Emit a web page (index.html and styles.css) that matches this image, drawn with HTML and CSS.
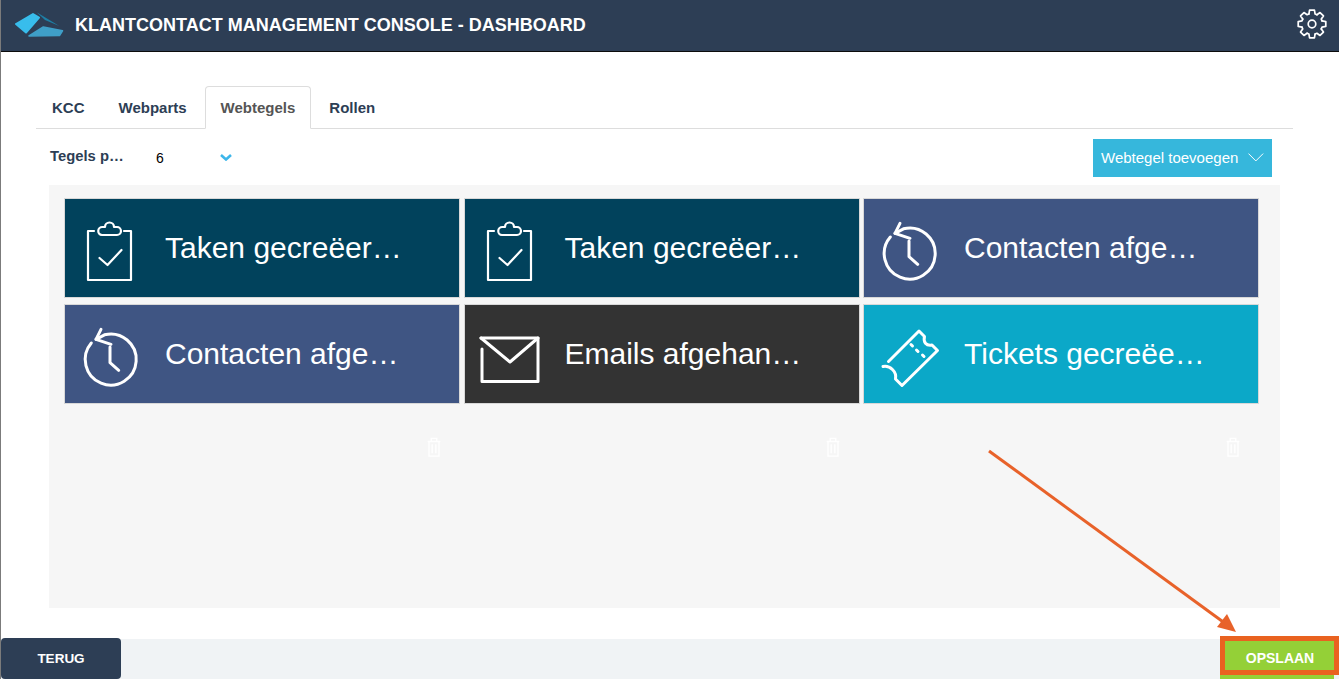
FILE: index.html
```html
<!DOCTYPE html>
<html lang="en">
<head>
    <meta charset="UTF-8">
    <meta name="viewport" content="width=device-width, initial-scale=1.0">
    <title>Klantcontact Management Console - Dashboard</title>
    <link rel="stylesheet" href="styles.css">
</head>
<body>
    <div class="page">
        <header class="topbar">
            <svg class="logo" viewBox="0 0 52 26" width="52" height="26">
                <path fill="#38bdec" stroke="#38bdec" stroke-width="2" stroke-linejoin="round" d="M2 12 L19 2 L25 5.500 L12 20.500 Z"/>
                <path fill="#1d7fa6" d="M22.700 0.300 L45.300 14 L31 8 Z"/>
                <path fill="#3f9fc8" stroke="#3f9fc8" stroke-width="1.500" stroke-linejoin="round" d="M15 24 L29.300 15 L48.500 18.800 L45.500 23.500 Z"/>
            </svg>
            <h1 class="title">KLANTCONTACT MANAGEMENT CONSOLE - DASHBOARD</h1>
            <svg class="gear" viewBox="-16 -16 32 32" width="32" height="32">
                <defs>
                    <path id="gear-seg" d="M-3.070 -10.040 L-2.430 -13.790 L2.430 -13.790 L3.070 -10.040 L4.930 -9.270"/>
                </defs>
                <g fill="none" stroke="#fff" stroke-width="1.700" stroke-linejoin="round" stroke-linecap="round">
                    <use href="#gear-seg"/>
                    <use href="#gear-seg" transform="rotate(45)"/>
                    <use href="#gear-seg" transform="rotate(90)"/>
                    <use href="#gear-seg" transform="rotate(135)"/>
                    <use href="#gear-seg" transform="rotate(180)"/>
                    <use href="#gear-seg" transform="rotate(225)"/>
                    <use href="#gear-seg" transform="rotate(270)"/>
                    <use href="#gear-seg" transform="rotate(315)"/>
                    <circle r="3.800"/>
                </g>
            </svg>
        </header>

        <main class="content">
            <nav class="tabs">
                <a class="tab">KCC</a>
                <a class="tab">Webparts</a>
                <a class="tab active">Webtegels</a>
                <a class="tab">Rollen</a>
            </nav>

            <div class="toolbar">
                <span class="field-label">Tegels p…</span>
                <span class="field-value">6</span>
                <svg class="field-arrow" viewBox="0 0 12 7" width="12" height="7">
                    <path d="M1 1 L6 5.500 L11 1" fill="none" stroke="#3db6ea" stroke-width="2.600"/>
                </svg>
                <button class="add-btn">
                    Webtegel toevoegen
                    <svg viewBox="0 0 16 9" width="16" height="9">
                        <path d="M0.500 0.500 L8 8 L15.500 0.500" fill="none" stroke="#fff" stroke-width="1"/>
                    </svg>
                </button>
            </div>

            <section class="panel">
                <div class="tile-grid">
                    <div class="tile teal">
                        <svg class="tile-icon" viewBox="0 0 100 98">
                            <g class="line">
                                <path d="M29 32H23V81H66V32H59"/>
                                <path d="M37 36H52a4 4 0 0 0 0-8H49a4.500 4.500 0 0 0-9 0H37.500a4 4 0 0 0-.5 8z"/>
                                <path d="M34.500 59L42.500 66L56.500 51"/>
                            </g>
                        </svg>
                        <span class="tile-text">Taken gecreëer…</span>
                    </div>
                    <div class="tile teal">
                        <svg class="tile-icon" viewBox="0 0 100 98">
                            <g class="line">
                                <path d="M29 32H23V81H66V32H59"/>
                                <path d="M37 36H52a4 4 0 0 0 0-8H49a4.500 4.500 0 0 0-9 0H37.500a4 4 0 0 0-.5 8z"/>
                                <path d="M34.500 59L42.500 66L56.500 51"/>
                            </g>
                        </svg>
                        <span class="tile-text">Taken gecreëer…</span>
                    </div>
                    <div class="tile blue">
                        <svg class="tile-icon" viewBox="0 0 100 98">
                            <g class="line thick">
                                <path d="M26.300 38A25.500 25.500 0 1 0 39.500 29.800L31 34.300"/>
                                <path d="M36 24.300L31 34.300L46 39.300"/>
                                <path d="M45 42V57.700L53.700 65.300"/>
                            </g>
                        </svg>
                        <span class="tile-text">Contacten afge…</span>
                    </div>
                    <div class="tile blue">
                        <svg class="tile-icon" viewBox="0 0 100 98">
                            <g class="line thick">
                                <path d="M26.300 38A25.500 25.500 0 1 0 39.500 29.800L31 34.300"/>
                                <path d="M36 24.300L31 34.300L46 39.300"/>
                                <path d="M45 42V57.700L53.700 65.300"/>
                            </g>
                        </svg>
                        <span class="tile-text">Contacten afge…</span>
                    </div>
                    <div class="tile dark">
                        <svg class="tile-icon" viewBox="0 0 100 98">
                            <g class="line thick">
                                <path d="M16 33H73V76.500H17V44"/>
                                <path d="M16 33L45 57L73 33"/>
                            </g>
                        </svg>
                        <span class="tile-text">Emails afgehan…</span>
                    </div>
                    <div class="tile cyan">
                        <svg class="tile-icon" viewBox="0 0 100 98">
                            <g class="line thick">
                                <path d="M24.500 56.500L55 26L60.500 31.500C59 37 62 41 68 40L73.500 45.500L38 80.500L31.500 74C33 67 26 60 19 61.500"/>
                                <path d="M47 39.500L48.500 41M52.500 45L54 46.500M58.500 50L60 51.500"/>
                            </g>
                        </svg>
                        <span class="tile-text">Tickets gecreëe…</span>
                    </div>
                </div>

                <div class="trash-row">
                    <svg class="trash" viewBox="0 0 16 22" width="16" height="20"><path d="M1 5H15M5 5V1.500H11V5M2.500 5V21H13.500V5M6 8V18M10 8V18"/></svg>
                    <svg class="trash" viewBox="0 0 16 22" width="16" height="20"><path d="M1 5H15M5 5V1.500H11V5M2.500 5V21H13.500V5M6 8V18M10 8V18"/></svg>
                    <svg class="trash" viewBox="0 0 16 22" width="16" height="20"><path d="M1 5H15M5 5V1.500H11V5M2.500 5V21H13.500V5M6 8V18M10 8V18"/></svg>
                </div>
            </section>
        </main>

        <footer class="footer">
            <button class="back-btn">TERUG</button>
            <button class="save-btn">OPSLAAN</button>
            <span class="highlight"></span>
        </footer>

        <!-- annotation arrow over the page -->
        <svg class="annotation" viewBox="0 0 1339 679" width="1339" height="679">
            <path d="M989 451L1226 624" stroke="#e8622a" stroke-width="3" fill="none"/>
            <path d="M1236 632L1217 627L1227 614Z" fill="#e8622a"/>
        </svg>
    </div>
</body>
</html>
```

FILE: styles.css
```css
* {
    box-sizing: border-box;
}
html, body {
    margin: 0;
    height: 100%;
    overflow: hidden;
}
body {
    font-family: "Liberation Sans", Arial, sans-serif;
    background-color: white;
}
.page {
    position: relative;
    display: flex;
    flex-direction: column;
    height: 679px;
    border-left: 1px solid #7b7b7b;
}

/* top bar */
.topbar {
    display: flex;
    align-items: center;
    height: 52px;
    padding: 0 11px 0 13px;
    background-color: #2d3e55;
    border-bottom: 1px solid #0c0c0c;
    flex: none;
}
.logo {
    flex: none;
    margin-top: -1px;
}
.title {
    margin: 0 0 0 9px;
    font-size: 18px;
    font-weight: bold;
    color: white;
}
.gear {
    margin-left: auto;
    margin-top: -4px;
}

/* tabs */
.content {
    flex: 1;
    padding: 34px 46px 0 35px;
}
.tabs {
    display: flex;
    gap: 2px;
    height: 43px;
    border-bottom: 1px solid #dddddd;
}
.tab {
    height: 43px;
    padding: 13px 16px 0 16px;
    font-size: 15px;
    font-weight: bold;
    color: #2d3e55;
}
.tab.active {
    padding: 12px 15px 0 15px;
    color: #555555;
    background-color: white;
    border: 1px solid #dddddd;
    border-bottom: 1px solid white;
    border-radius: 4px 4px 0 0;
}

/* toolbar */
.toolbar {
    display: flex;
    align-items: center;
    height: 56px;
    padding: 0 0 0 14px;
}
.field-label {
    width: 106px;
    margin-top: -2px;
    font-size: 14.800px;
    font-weight: bold;
    color: #2d3e55;
}
.field-value {
    width: 64px;
    margin-top: 2px;
    font-size: 14px;
    color: black;
}
.field-arrow {
    margin-top: 1px;
}
.add-btn {
    display: flex;
    align-items: center;
    gap: 10px;
    width: 179px;
    height: 38px;
    margin-left: auto;
    margin-right: 21px;
    margin-top: 2px;
    padding: 0 8px 2px;
    border: none;
    background-color: #36b7dc;
    color: white;
    font-family: inherit;
    font-size: 15px;
    white-space: nowrap;
}

/* tiles */
.panel {
    height: 423px;
    margin: 0 13px;
    padding: 13px 15px 0;
    background-color: #f6f6f6;
}
.tile-grid {
    display: grid;
    grid-template-columns: repeat(3, 396px);
    grid-auto-rows: 100px;
    column-gap: 3.500px;
    row-gap: 6px;
}
.tile {
    display: flex;
    align-items: center;
    border: 1px solid #d8d8d8;
    color: white;
}
.tile.teal {
    background-color: #01425c;
}
.tile.blue {
    background-color: #3f5583;
}
.tile.dark {
    background-color: #333333;
}
.tile.cyan {
    background-color: #0ba8c8;
}
.tile-icon {
    flex: 0 0 100px;
    width: 100px;
    height: 98px;
}
.line {
    fill: none;
    stroke: white;
    stroke-width: 2.200;
    stroke-linecap: round;
    stroke-linejoin: round;
}
.line.thick {
    stroke-width: 3;
}
.tile-text {
    font-size: 30px;
    white-space: nowrap;
}
.trash-row {
    display: grid;
    grid-template-columns: repeat(3, 399.500px);
    margin-top: 33px;
    justify-items: end;
}
.trash {
    margin-right: 22px;
    fill: none;
    stroke: white;
    stroke-width: 1.500;
}

/* footer */
.footer {
    display: flex;
    justify-content: space-between;
    align-items: flex-end;
    height: 40px;
    background-color: #f0f3f5;
    flex: none;
}
.back-btn {
    width: 120px;
    height: 41px;
    border: none;
    border-radius: 4px;
    background-color: #2d3e55;
    color: white;
    font-family: inherit;
    font-size: 13.500px;
    font-weight: bold;
}
.save-btn {
    width: 114px;
    height: 40px;
    margin-right: 5px;
    padding: 0 0 3px 6px;
    border: none;
    background-color: #94d037;
    color: white;
    font-family: inherit;
    font-size: 14px;
    font-weight: bold;
}
.highlight {
    position: absolute;
    right: 0;
    bottom: 4px;
    width: 119px;
    height: 39px;
    border: 5px solid #e96220;
}

.annotation {
    position: absolute;
    top: 0;
    left: -1px;
    pointer-events: none;
}
```
